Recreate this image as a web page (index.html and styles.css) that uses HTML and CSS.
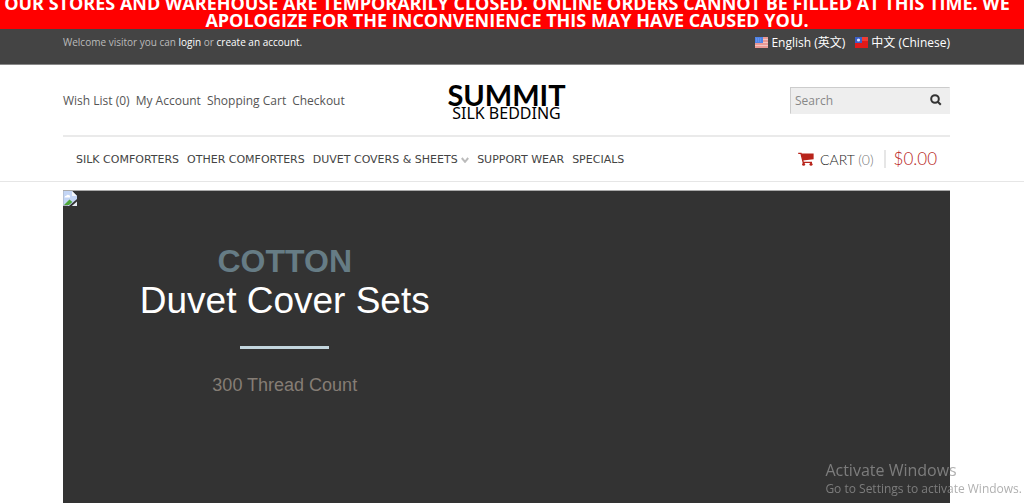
FILE: index.html
```html
<!DOCTYPE html>
<html lang="en">
<head>
  <meta charset="UTF-8">
  <meta name="viewport" content="width=device-width, initial-scale=1.0">
  <title>Summit Silk Bedding</title>
  <link rel="stylesheet" href="styles.css">
</head>
<body>

<div class="notice">
  <p>OUR STORES AND WAREHOUSE ARE TEMPORARILY CLOSED. ONLINE ORDERS CANNOT BE FILLED AT THIS TIME. WE APOLOGIZE FOR THE INCONVENIENCE THIS MAY HAVE CAUSED YOU.</p>
</div>

<div class="topbar">
  <div class="container topbar-row">
    <p class="welcome">Welcome visitor you can <a href="#">login</a> or <a href="#">create an account.</a></p>
    <div class="languages">
      <a href="#">
        <svg class="flag" viewBox="0 0 13 11" aria-hidden="true">
          <rect width="13" height="11" fill="#f3c4c0"/>
          <path d="M0 1h13M0 4h13M0 7h13M0 10h13" stroke="#e88a86" stroke-width="1.4"/>
          <rect width="8" height="6" fill="#4f83e6"/>
          <path d="M1 2h6M1 4h6" stroke="#8fb2f5" stroke-width=".7" stroke-dasharray="1 1"/>
        </svg>
        English (英文)
      </a>
      <a href="#">
        <svg class="flag" viewBox="0 0 13 11" aria-hidden="true">
          <rect width="13" height="11" fill="#e01a1a"/>
          <path d="M0 0h13v4H0z" fill="#f03c35"/>
          <rect width="7" height="6" fill="#3c5fc8"/>
          <circle cx="3.5" cy="3" r="1.6" fill="#dce6ff"/>
        </svg>
        中文 (Chinese)
      </a>
    </div>
  </div>
</div>

<header>
  <div class="container header-row">
    <ul class="links">
      <li><a href="#">Wish List (0)</a></li>
      <li><a href="#">My Account</a></li>
      <li><a href="#">Shopping Cart</a></li>
      <li><a href="#">Checkout</a></li>
    </ul>
    <a class="logo" href="#"><span class="logo-name">SUMMIT</span><span class="logo-sub">SILK BEDDING</span></a>
    <form class="search">
      <input type="text" placeholder="Search" aria-label="Search">
      <button type="button" aria-label="Search">
        <svg viewBox="0 0 12 12" aria-hidden="true"><circle cx="5" cy="5" r="3.8"/><path d="M7.8 7.8l3 3"/></svg>
      </button>
    </form>
  </div>

  <div class="container">
    <div class="nav-row">
      <nav>
        <ul class="menu">
          <li><a href="#">SILK COMFORTERS</a></li>
          <li><a href="#">OTHER COMFORTERS</a></li>
          <li><a href="#">DUVET COVERS &amp; SHEETS
            <svg class="chevron" viewBox="0 0 8 6" aria-hidden="true"><path d="M.8 1L4 4.8 7.2 1"/></svg></a></li>
          <li><a href="#">SUPPORT WEAR</a></li>
          <li><a href="#">SPECIALS</a></li>
        </ul>
      </nav>
      <a class="cart" href="#">
        <svg class="cart-icon" viewBox="0 0 16 14" aria-hidden="true">
          <path d="M.2 1.4h2.8l2.2 9h8.8" fill="none" stroke="#b8241b" stroke-width="1.4"/>
          <path d="M3.2 1.6h12.4v5.6L4.8 8.6z" fill="#b8241b"/>
          <circle cx="5.6" cy="12.3" r="1.5" fill="#b8241b"/>
          <circle cx="13" cy="12.3" r="1.5" fill="#b8241b"/>
        </svg>
        <span class="cart-label">CART <span class="cart-count">(0)</span></span>
        <span class="cart-total">$0.00</span>
      </a>
    </div>
  </div>
</header>

<main class="container">
  <section class="slider">
    <svg class="missing" viewBox="0 0 14 15" aria-hidden="true">
      <path d="M0 0h9l5 5v3L6 15H0z" fill="#c3d5f5"/>
      <path d="M9 0v5h5z" fill="#f4f7fc"/>
      <path d="M1.5 6.5q0-1.8 1.8-1.8 1-1.7 2.6-.6 1.6.5 1.3 2.4z" fill="#fff"/>
      <path d="M1 14l5.5-5.6L9.4 11 6 14z" fill="#4fa83a"/>
      <path d="M0 0v15M0 14.5h5" stroke="#a8b0b8" fill="none"/>
      <path d="M14 10.5V15H8.8z" fill="#e6eaf2"/>
    </svg>
    <div class="caption">
      <h2>COTTON</h2>
      <h1>Duvet Cover Sets</h1>
      <hr>
      <p>300 Thread Count</p>
    </div>
  </section>
</main>

<div class="watermark">
  <p class="watermark-title">Activate Windows</p>
  <p>Go to Settings to activate Windows.</p>
</div>

</body>
</html>
```
FILE: styles.css
```css
* { box-sizing:border-box; }
html { overflow:hidden; }
body { margin:0; background:#fff; color:#555; font-family:"Open Sans","Noto Sans CJK SC",sans-serif; font-size:12px; }
p, h1, h2, ul { margin:0; padding:0; font-weight:normal; }
ul { list-style:none; }
a { color:inherit; text-decoration:none; }
.container { margin:0 74px 0 63px; }

/* Closing notice */
.notice { display:flex; align-items:flex-end; height:29px; overflow:hidden; background:#f00; }
.notice p { flex:1; padding-right:10px; color:#fff; font-size:18px; font-weight:bold; line-height:17px; text-align:center; }

/* Top bar */
.topbar { height:36px; background:#444; border-bottom:1px solid #888; }
.topbar-row { display:flex; justify-content:space-between; line-height:27px; }
.welcome { color:#bbb; font-size:10px; }
.welcome a { color:#fff; }
.languages { display:flex; gap:10px; color:#fff; }
.languages a { display:flex; align-items:center; gap:3px; }
.flag { width:13px; height:11px; }

/* Header */
header { border-bottom:1px solid #e6e6e6; }
.header-row { display:grid; grid-template-columns:1fr auto 1fr; align-items:center; height:70px; }
.links { display:flex; gap:6px; }
.logo { display:flex; flex-direction:column; align-items:center; padding-top:2px; color:#000; font-family:Lato,sans-serif; }
.logo-name { font-size:29px; font-weight:bold; line-height:24px; }
.logo-sub { font-family:"Noto Sans",sans-serif; font-size:16px; line-height:12px; }
.search { display:flex; justify-self:end; width:160px; height:27px; background:#eee; border:1px solid #ddd; border-color:#ccc #eee #eee #ccc; }
.search input { flex:1; min-width:0; padding:0 4px; border:0; background:none; font:inherit; }
.search input::placeholder { color:#888; opacity:1; }
.search button { width:26px; padding:0; border:0; background:none; }
.search svg { display:block; width:12px; height:12px; margin:auto; fill:none; stroke:#333; stroke-width:2; }

/* Menu and cart */
.nav-row { display:flex; justify-content:space-between; align-items:center; height:46px; padding:0 13px; border-top:2px solid #eaeaea; }
.menu { display:flex; gap:8px; color:#444; font-family:"DejaVu Sans",sans-serif; font-size:11px; }
.chevron { width:8px; height:6px; fill:none; stroke:#bbb; stroke-width:2; }
.cart { display:flex; align-items:center; font-family:Lato,sans-serif; }
.cart-icon { width:16px; height:14px; margin-right:6px; }
.cart-label { font-size:14px; font-weight:300; color:#222; }
.cart-count { color:#777; }
.cart-total { margin-left:10px; padding-left:8px; border-left:2px solid #e6e6e6; color:#b8241b; font-size:17px; font-weight:300; line-height:18px; }

/* Slider */
.slider { min-height:500px; margin-top:8px; background:#333; border-top:1px solid #aaa; }
.missing { display:block; width:14px; height:15px; }
.caption { width:50%; padding-top:35px; text-align:center; font-family:"Liberation Sans",Arial,sans-serif; }
.caption h2 { color:#667c85; font-size:32px; font-weight:bold; line-height:40px; }
.caption h1 { color:#fff; font-size:37px; line-height:40px; }
.caption hr { width:20%; height:3px; margin:25px auto 24px; border:0; background:#c3d6de; }
.caption p { color:#857d75; font-size:18px; line-height:24px; }

/* Desktop watermark */
.watermark { position:fixed; right:2px; bottom:5px; color:rgba(150,150,150,.75); font-size:12px; line-height:18px; }
.watermark-title { font-size:16px; line-height:20px; }
```
